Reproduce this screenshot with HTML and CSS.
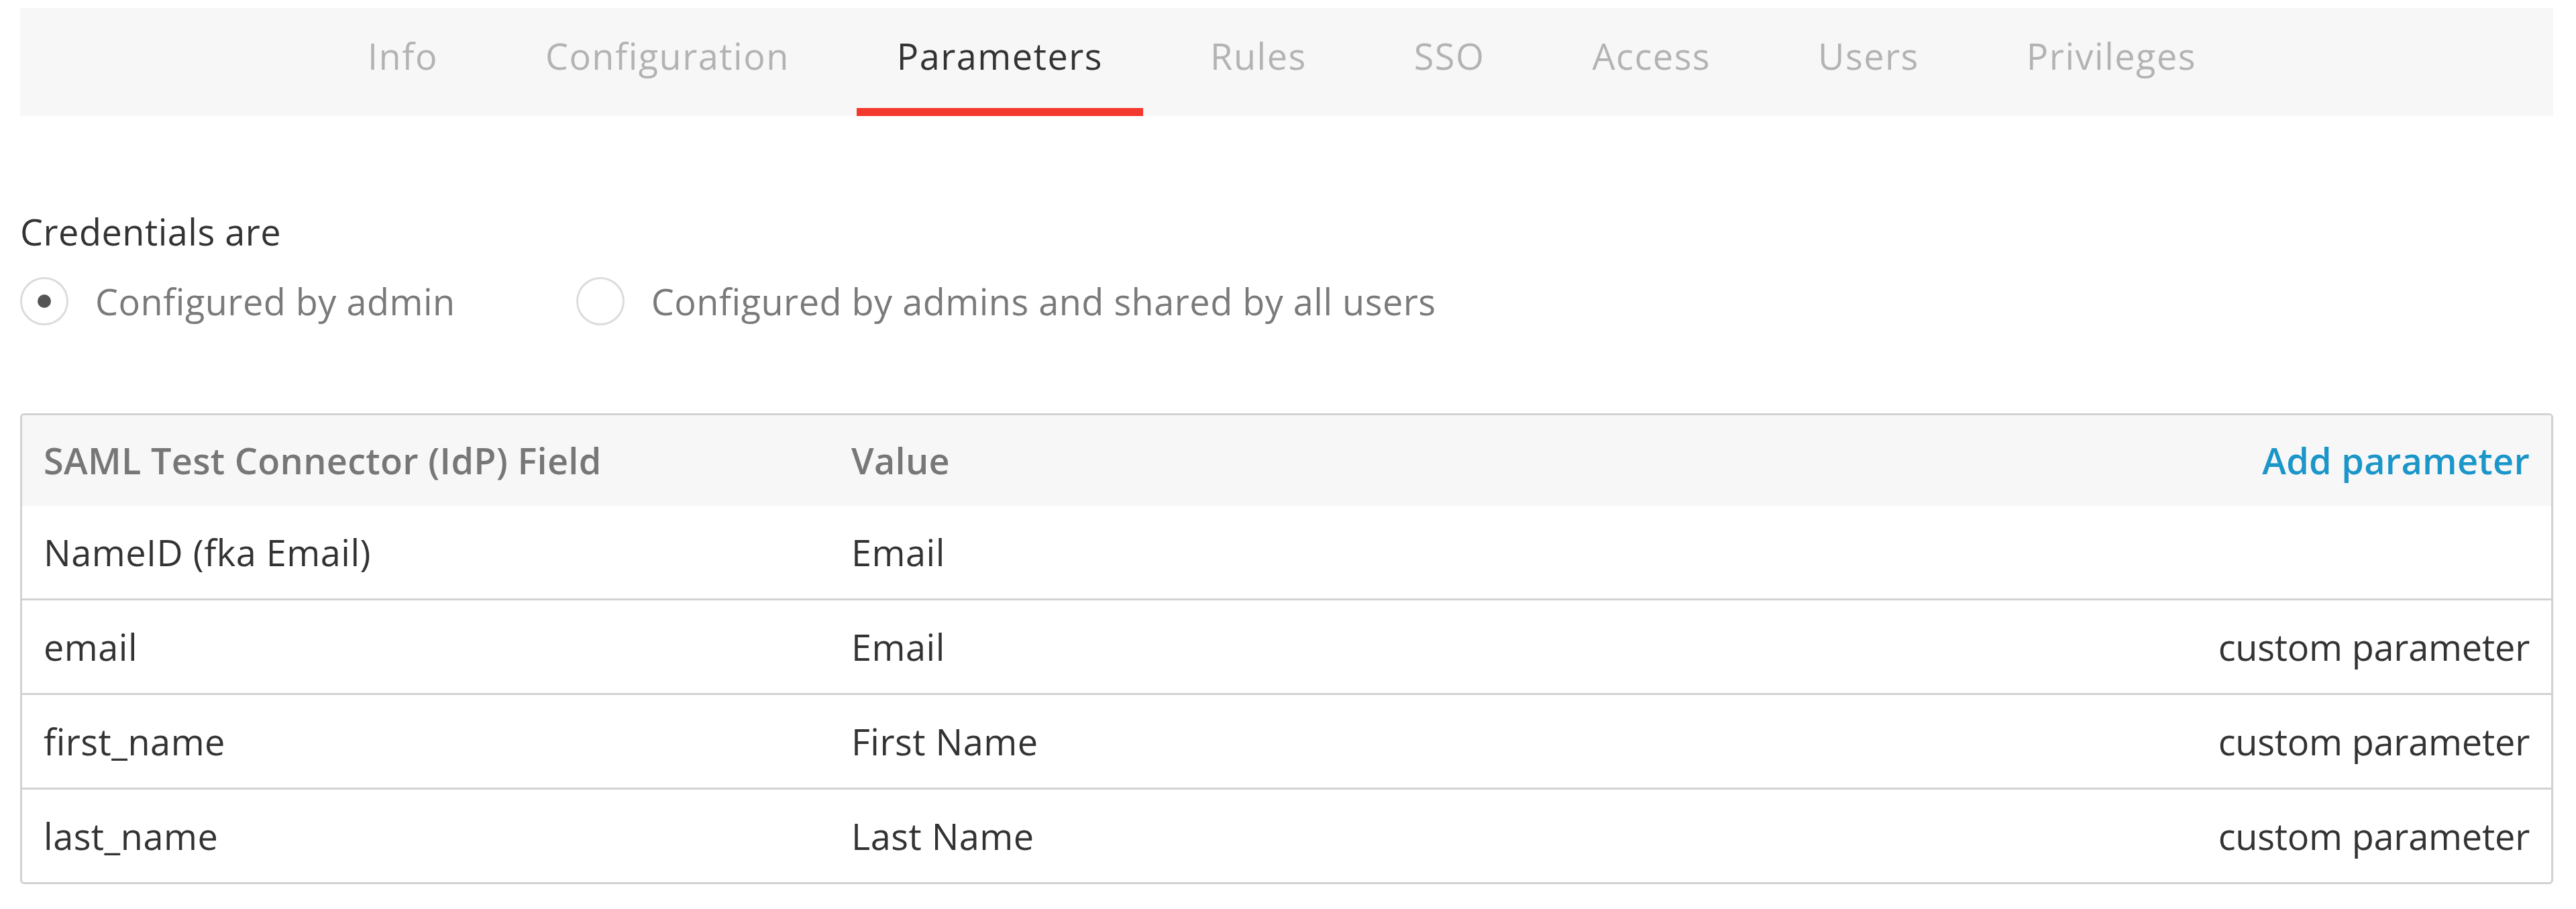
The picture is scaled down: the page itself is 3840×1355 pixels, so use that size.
FILE: index.html
```html
<!DOCTYPE html>
<html>

<head>
    <meta charset="utf-8" />
    <title>SAML Test Connector - Parameters</title>
    <link rel="stylesheet" href="styles.css">
</head>

<body>
    <div class="page">
        <div class="tabs">
            <a class="tab">Info</a>
            <a class="tab">Configuration</a>
            <a class="tab active">Parameters</a>
            <a class="tab">Rules</a>
            <a class="tab">SSO</a>
            <a class="tab">Access</a>
            <a class="tab">Users</a>
            <a class="tab">Privileges</a>
        </div>

        <div class="credentials">
            <p class="label">Credentials are</p>
            <div class="radios">
                <label class="radio checked"><span class="circle"></span>Configured by admin</label>
                <label class="radio"><span class="circle"></span>Configured by admins and shared by all users</label>
            </div>
        </div>

        <div class="params">
            <div class="row head">
                <span>SAML Test Connector (IdP) Field</span>
                <span>Value</span>
                <a class="add">Add parameter</a>
            </div>
            <div class="row">
                <span>NameID (fka Email)</span>
                <span>Email</span>
                <span></span>
            </div>
            <div class="row">
                <span>email</span>
                <span>Email</span>
                <span class="note">custom parameter</span>
            </div>
            <div class="row">
                <span>first_name</span>
                <span>First Name</span>
                <span class="note">custom parameter</span>
            </div>
            <div class="row">
                <span>last_name</span>
                <span>Last Name</span>
                <span class="note">custom parameter</span>
            </div>
        </div>
    </div>
</body>

</html>
```

FILE: styles.css
```css
body {
    margin: 0;
    background-color: white;
    font-family: 'Open Sans', 'Noto Sans', sans-serif;
    font-size: 54px;
    line-height: 74px;
    letter-spacing: 0.5px;
    color: #333;
}

.page {
    padding: 12px 34px 0 30px;
}

.tabs {
    display: flex;
    justify-content: center;
    gap: 40px;
    height: 161px;
    padding-right: 14px;
    background-color: #f7f7f7;
}

.tab {
    box-sizing: border-box;
    padding: 34px 60px 0;
    border-bottom: 12px solid transparent;
    color: #b3b3b3;
    letter-spacing: 1.5px;
    cursor: pointer;
}

.tab.active {
    color: #333;
    border-bottom-color: #f3392e;
}

.credentials {
    padding-top: 135px;
}

.label {
    margin: 0;
}

.radios {
    display: flex;
    gap: 180px;
    margin-top: 30px;
}

.radio {
    display: flex;
    align-items: center;
    gap: 40px;
    color: #7a7a7a;
}

.circle {
    box-sizing: border-box;
    width: 72px;
    height: 72px;
    border: 3px solid #dcdcdc;
    border-radius: 50%;
    display: flex;
    align-items: center;
    justify-content: center;
}

.radio.checked .circle::after {
    content: '';
    width: 20px;
    height: 20px;
    border-radius: 50%;
    background-color: #555;
}

.params {
    margin-top: 130px;
    border: 3px solid #d2d2d2;
    border-radius: 6px;
    overflow: hidden;
}

.row {
    display: grid;
    grid-template-columns: 1204px 1fr auto;
    padding: 32px;
    border-top: 3px solid #d2d2d2;
}

.row.head {
    border-top: none;
    background-color: #f7f7f7;
    color: #777;
    font-weight: 600;
    letter-spacing: 0.3px;
    padding: 30px 32px 31px;
}

.row.head + .row {
    border-top: none;
}

.add {
    color: #1b96c9;
    cursor: pointer;
}

.note {
    text-align: right;
    letter-spacing: -0.2px;
}
```
